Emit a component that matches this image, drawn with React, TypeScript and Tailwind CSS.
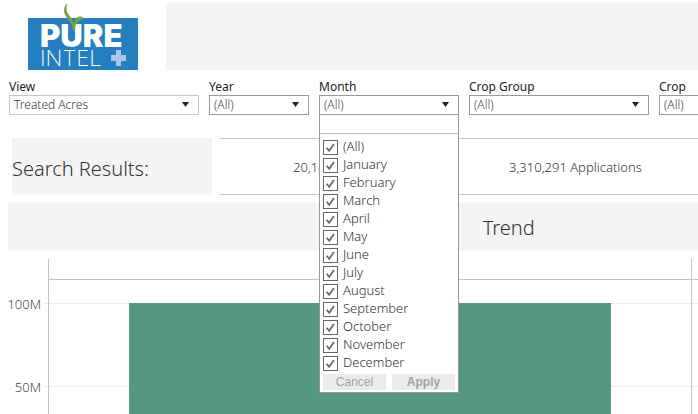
import React, { useState } from 'react'

const MONTHS = [
  'January',
  'February',
  'March',
  'April',
  'May',
  'June',
  'July',
  'August',
  'September',
  'October',
  'November',
  'December',
]

interface FilterProps {
  id: string
  label: string
  value: string
  className: string
  light?: boolean
  children?: React.ReactNode
}

const Filter: React.FC<FilterProps> = ({ id, label, value, className, light, children }) => (
  <div className={`relative shrink-0 ${className}`}>
    <label htmlFor={id} className="block h-4 text-xs font-normal leading-4 text-[#222]">
      {label}
    </label>
    <div className="relative">
      <select
        id={id}
        defaultValue={value}
        className={`block h-5 w-full appearance-none border bg-white pl-1 text-xs leading-4 ${
          light ? 'border-[#c8c8c8] text-[#333]' : 'border-[#999] text-[#444]'
        }`}
      >
        <option>{value}</option>
      </select>
      <svg
        viewBox="0 0 7 5"
        className="pointer-events-none absolute right-2.5 top-[7px] h-[5px] w-[7px]"
        aria-hidden="true"
      >
        <path d="M0 0h7L3.500 5z" fill="#222" />
      </svg>
    </div>
    {children}
  </div>
)

interface CheckItemProps {
  label: string
  checked: boolean
  onChange: (checked: boolean) => void
}

const CheckItem: React.FC<CheckItemProps> = ({ label, checked, onChange }) => (
  <label className="flex h-[18px] items-center gap-[5px] text-[13px] text-[#333]">
    <span className="grid size-[15px] shrink-0">
      <input
        type="checkbox"
        checked={checked}
        onChange={(e) => onChange(e.target.checked)}
        className="peer col-start-1 row-start-1 size-[15px] appearance-none border border-[#666] bg-white"
      />
      <svg
        viewBox="0 0 15 15"
        className="pointer-events-none invisible col-start-1 row-start-1 peer-checked:visible"
        fill="none"
        stroke="#666"
        strokeWidth="1.7"
        aria-hidden="true"
      >
        <path d="M3.600 7.800l2.600 3L11 4" />
      </svg>
    </span>
    {label}
  </label>
)

const MonthMenu: React.FC = () => {
  const [selected, setSelected] = useState<string[]>(MONTHS)

  const toggle = (month: string, on: boolean) => {
    setSelected(on ? [...selected, month] : selected.filter((m) => m !== month))
  }

  return (
    <div className="absolute inset-x-0 top-[35px] z-10 border border-[#999] bg-white">
      <input
        type="text"
        aria-label="Search months"
        className="block h-[19px] w-full border-b border-[#bbb] px-1 text-xs outline-none"
      />
      <div className="px-[3px] pt-1">
        <CheckItem
          label="(All)"
          checked={selected.length === MONTHS.length}
          onChange={(on) => setSelected(on ? MONTHS : [])}
        />
        {MONTHS.map((month) => (
          <CheckItem
            key={month}
            label={month}
            checked={selected.includes(month)}
            onChange={(on) => toggle(month, on)}
          />
        ))}
      </div>
      <div className="flex gap-1.5 px-[3px] pb-0.5 pt-0.5 font-['Liberation_Sans',sans-serif] text-xs leading-4 text-[#a3a3a3]">
        <button type="button" className="flex-1 bg-[#ebebeb]">
          Cancel
        </button>
        <button type="button" className="flex-1 bg-[#ebebeb] font-bold">
          Apply
        </button>
      </div>
    </div>
  )
}

const Logo: React.FC = () => (
  <svg viewBox="0 0 110 70" className="h-[70px] w-[110px] shrink-0" role="img" aria-label="Pure Intel">
    <rect y="18" width="110" height="52" fill="#257ec0" />
    <text x="12" y="47" fill="#fff" fontFamily="Inter, sans-serif" fontWeight="900" fontSize="31">
      PURE
    </text>
    <text x="12" y="66" fill="#fff" fontFamily="Inter, sans-serif" fontWeight="200" fontSize="22">
      INTEL
    </text>
    <path d="M88 50h5v5h5v6h-5v5h-5v-5h-5v-6h5z" fill="#a9c8ee" />
    <path
      d="M39.500 3C35 7 35 13 39 18c4 4 5.500 8 6 13h1.500c.3-6 2.500-10 9-12.500-2-4-9-2-9.500 5.500-.8-4-2.500-5.500-4.500-8C38 11.500 38 8 39.500 3z"
      fill="#77a23f"
    />
  </svg>
)

const TrendChart: React.FC = () => (
  <div className="mt-2 flex">
    <div className="w-11 shrink-0 pr-[3px] pt-9 text-right text-[13px] leading-[18px] text-[#444]">
      <div className="h-[83px]">100M</div>
      <div>50M</div>
    </div>
    <svg className="h-[155px] min-w-0 flex-1" shapeRendering="crispEdges" role="img" aria-label="Trend">
      <rect x="0" y="44" width="100%" height="1" fill="#ececec" />
      <rect x="0" y="127" width="100%" height="1" fill="#ececec" />
      <rect x="4" y="20" width="100%" height="1" fill="#c4c4c4" />
      <rect x="4" y="0" width="1" height="100%" fill="#c4c4c4" />
      <rect x="98.930%" y="0" width="1" height="100%" fill="#c4c4c4" />
      <rect x="13%" y="44" width="73.700%" height="100%" fill="#569784" />
    </svg>
  </div>
)

export default function App() {
  return (
    <main className="overflow-hidden bg-white font-['Noto_Sans',sans-serif] font-light">
      <header className="flex items-start gap-7 pl-7">
        <Logo />
        <div className="mt-[3px] h-[67px] flex-1 bg-[#f4f4f4]" />
      </header>

      <div className="mt-[9px] flex gap-2.5 pl-[9px]">
        <Filter id="view" label="View" value="Treated Acres" className="w-[190px]" light />
        <Filter id="year" label="Year" value="(All)" className="w-[100px]" />
        <Filter id="month" label="Month" value="(All)" className="w-[140px]">
          <MonthMenu />
        </Filter>
        <Filter id="crop-group" label="Crop Group" value="(All)" className="w-[180px]" />
        <Filter id="crop" label="Crop" value="(All)" className="w-[180px]" />
      </div>

      <section className="mt-[23px] flex gap-2 pl-3">
        <h2 className="flex h-[57px] w-[200px] shrink-0 items-center bg-[#f4f4f4] pt-1 text-xl text-[#333]">
          Search Results:
        </h2>
        <div className="flex flex-1 items-center border-y border-[#c4c4c4] pl-[73px] pt-0.5 text-[13px] text-[#333]">
          <span className="w-[216px] shrink-0">20,14</span>
          <span className="whitespace-nowrap">3,310,291 Applications</span>
        </div>
      </section>

      <h2 className="ml-2 mt-2 flex h-12 items-center bg-[#f4f4f4] pl-[68%] pt-0.5 text-xl text-[#333]">Trend</h2>
      <TrendChart />
    </main>
  )
}
